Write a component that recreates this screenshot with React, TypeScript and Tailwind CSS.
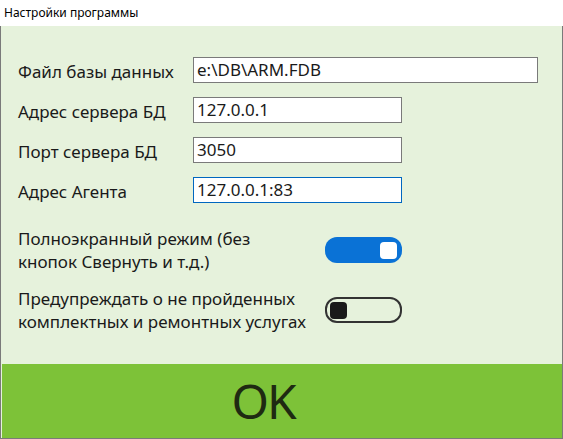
export default function App() {
    const fields = [
        { label: "Файл базы данных", value: "e:\\DB\\ARM.FDB", wide: true },
        { label: "Адрес сервера БД", value: "127.0.0.1" },
        { label: "Порт сервера БД", value: "3050" },
        { label: "Адрес Агента", value: "127.0.0.1:83", focused: true },
    ];

    return (
        <div className="w-[563px] h-[439px] flex flex-col bg-white text-[#1a1a1a] font-['Noto_Sans',sans-serif]">
            {/* Заголовок окна */}
            <div className="h-[26px] flex items-center px-[4px] text-[12px] text-black shrink-0">
                Настройки программы
            </div>

            <div className="flex-1 flex flex-col border-x border-b border-[#7a7a7a] bg-[#e6f2dc]">
                {/* Поля */}
                <div className="flex-1 flex flex-col px-[17px] pt-[31px]">
                    <div className="flex flex-col gap-[14px]">
                        {fields.map((f) => (
                            <div key={f.label} className="flex items-center h-[26px]">
                                <div className="w-[175px] text-[17px] pt-[3px] shrink-0">{f.label}</div>
                                <div
                                    className={`h-[26px] flex items-center px-[3px] bg-white text-[17px] border ${
                                        f.wide ? "w-[345px]" : "w-[209px]"
                                    } ${f.focused ? "border-[#0067c0]" : "border-[#7a7a7a]"}`}
                                >
                                    {f.value}
                                </div>
                            </div>
                        ))}
                    </div>

                    {/* Переключатели */}
                    <div className="flex flex-col gap-[14px] mt-[24px]">
                        <div className="flex items-center">
                            <div className="w-[307px] text-[17px] leading-[23px] shrink-0">
                                Полноэкранный режим (без
                                <br />
                                кнопок Свернуть и т.д.)
                            </div>
                            <div className="w-[77px] h-[26px] rounded-[12px] bg-[#0a72d6] flex items-center justify-end pr-[5px]">
                                <div className="w-[17px] h-[17px] rounded-[4px] bg-white" />
                            </div>
                        </div>
                        <div className="flex items-center">
                            <div className="w-[307px] text-[17px] leading-[23px] shrink-0">
                                Предупреждать о не пройденных
                                <br />
                                комплектных и ремонтных услугах
                            </div>
                            <div className="w-[77px] h-[26px] rounded-[12px] border-2 border-[#333] flex items-center pl-[3px]">
                                <div className="w-[17px] h-[17px] rounded-[4px] bg-[#1a1a1a]" />
                            </div>
                        </div>
                    </div>
                </div>

                {/* Кнопка OK */}
                <button className="h-[74px] ml-[1px] bg-[#7dc238] flex items-center justify-center pr-[38px] text-[48px] tracking-[-2px] text-[#1f2a12] shrink-0">
                    OK
                </button>
            </div>
        </div>
    );
}
